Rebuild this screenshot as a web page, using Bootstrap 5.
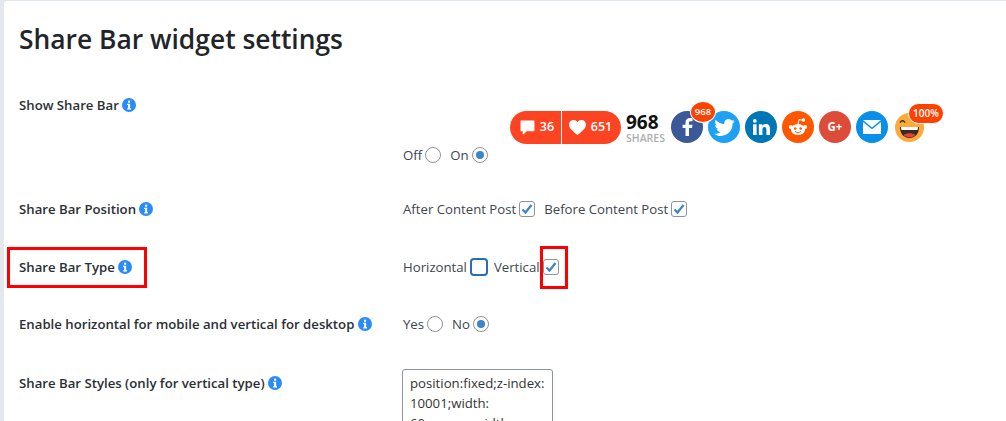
<!DOCTYPE html>
<html>
<head>
    <meta charset="UTF-8">
    <title>Share Bar widget settings</title>
    <link href="https://cdn.jsdelivr.net/npm/bootstrap@5.3.0/dist/css/bootstrap.min.css" rel="stylesheet">
    <style>
        html, body { height: 100%; overflow: hidden; }
        body { background: #e4e8ec; font-family: "Open Sans", "Noto Sans", sans-serif; color: #212529; font-size: 13px; }
        .panel-wrap { margin-left: 4px; padding-top: 1px; height: 421px; background: #dfe8f0; }
        .panel-main { background: #fff; height: 420px; padding: 20px 15px 0; overflow: hidden; border-top-left-radius: 3px; }
        .panel-title { font-size: 26.4px; font-weight: 600; line-height: 36px; margin: 0 0 38px; color: #212529; }
        .set-row { display: flex; position: relative; }
        .set-label { width: 384px; flex: none; font-weight: 600; font-size: 13.2px; line-height: 20px; color: #2a2f35; }
        .set-ctrl { font-size: 13.2px; line-height: 20px; color: #3d4650; }
        .row-show { height: 104px; }
        .row-pos { height: 58px; }
        .row-type { height: 57px; }
        .row-enable { height: 59px; }
        .info-ico { width: 14px; height: 14px; vertical-align: -2px; margin-left: 0; }
        .opt-line { display: flex; align-items: center; gap: 3px; height: 20px; }
        .opt-line .gap-after { margin-right: 6px; }
        .opt-line .gap-tight { margin-right: 3px; }
        .radio-ico, .check-ico { flex: none; }
        .bar-line { display: flex; align-items: center; margin-left: 107px; height: 34px; margin-top: 15px; margin-bottom: 1px; position: relative; width: 440px; }
        .pill-red { display: flex; background: #fc4422; color: #fff; height: 33px; border-radius: 17px; font-size: 12.5px; font-weight: 600; width: 111px; flex: none; }
        .pill-part { display: flex; align-items: center; justify-content: center; gap: 5px; }
        .pill-part:first-child { width: 52px; border-right: 1px solid #fff; padding-left: 3px; }
        .pill-part:last-child { flex: 1; padding-right: 2px; }
        .count-box { width: 50px; flex: none; padding-left: 5px; padding-top: 3px; line-height: 1; }
        .count-num { font-size: 19px; font-weight: 700; color: #111; line-height: 19px; }
        .count-lbl { font-size: 10.5px; font-weight: 600; color: #adadad; line-height: 13px; }
        .soc { width: 32px; height: 32px; border-radius: 50%; margin-right: 5px; flex: none; display: flex; align-items: center; justify-content: center; }
        .soc svg { display: block; }
        .soc-fb { background: #3b5998; }
        .soc-tw { background: #1da1f2; }
        .soc-li { background: #0077b5; }
        .soc-rd { background: #ff5700; }
        .soc-gp { background: #dd4b39; color: #fff; font-weight: 700; font-size: 11.5px; }
        .soc-ml { background: #0a8fe8; }
        .emoji-ico { margin-left: 2px; flex: none; }
        .bubble { position: absolute; background: #fc4200; color: #fff; font-weight: 600; border: 1px solid #fff; border-radius: 12px; text-align: center; }
        .bubble-fb { left: 180px; top: -9px; width: 26px; height: 22px; border-radius: 50%; font-size: 9.5px; line-height: 20px; }
        .bubble-em { left: 398px; top: -7px; width: 36px; height: 21px; font-size: 10px; line-height: 19px; }
        .mark-box { position: absolute; border: 3px solid #f00; pointer-events: none; }
        .mark-label { left: -12px; top: -10px; width: 140px; height: 41px; }
        .mark-check { left: 521px; top: -11px; width: 28px; height: 43px; }
        .style-box { width: 151px; height: 110px; border: 1px solid #8f9499; border-radius: 3px; padding: 3px 7px; font-size: 13.2px; line-height: 20px; color: #333; overflow: hidden; resize: none; font-family: inherit; display: block; margin-top: -4px; margin-left: -1px; white-space: pre; }
    </style>
</head>
<body>
    <div class="panel-wrap">
        <div class="panel-main">
            <h1 class="panel-title">Share Bar widget settings</h1>

            <div class="set-row row-show">
                <div class="set-label">Show Share Bar <svg class="info-ico" viewBox="0 0 16 16"><circle cx="8" cy="8" r="8" fill="#2b8cf7"/><rect x="6.900" y="3" width="2.400" height="2.400" fill="#fff"/><path d="M5.900 6.600h3.400v5h1v1.400H5.900v-1.400h1v-3.600h-1z" fill="#fff"/></svg></div>
                <div class="set-ctrl">
                    <div class="bar-line">
                        <div class="pill-red">
                            <div class="pill-part"><svg width="15" height="15" viewBox="0 0 14 14"><path d="M1 1h12v9H6l-3 3v-3H1z" fill="#fff" stroke="#fff" stroke-linejoin="round"/></svg>36</div>
                            <div class="pill-part"><svg width="17" height="15" viewBox="0 0 17 15"><path d="M8.500 15C3 10.500 0 8 0 4.500 0 2 2 0 4.500 0 6.200 0 7.700.9 8.500 2.300 9.300.9 10.800 0 12.500 0 15 0 17 2 17 4.500 17 8 14 10.500 8.500 15z" fill="#fff"/></svg>651</div>
                        </div>
                        <div class="count-box"><div class="count-num">968</div><div class="count-lbl">SHARES</div></div>
                        <div class="soc soc-fb"><svg width="11" height="18" viewBox="0 0 11 18"><path d="M7 18V10h3l.5-3.300H7V4.800C7 3.800 7.400 3.200 8.600 3.200h1.900V.3C10 .2 9 0 8 0 5.400 0 3.500 1.600 3.500 4.400v2.300H.6V10h2.900v8z" fill="#fff"/></svg></div>
                        <div class="soc soc-tw"><svg width="21" height="17" viewBox="0 0 24 20"><path d="M24 2.400c-.9.400-1.800.7-2.800.8 1-.6 1.800-1.600 2.200-2.700-1 .6-2 1-3.100 1.200C19.300.7 18 0 16.600 0c-2.700 0-4.900 2.200-4.900 4.900 0 .4 0 .8.100 1.100C7.700 5.800 4.100 3.900 1.700.9 1.200 1.600 1 2.500 1 3.400c0 1.700.9 3.200 2.200 4.100-.8 0-1.600-.2-2.200-.6v.1c0 2.400 1.700 4.400 3.900 4.800-.4.100-.8.200-1.300.2-.3 0-.6 0-.9-.1.600 2 2.400 3.400 4.600 3.400-1.700 1.300-3.800 2.100-6.100 2.100-.4 0-.8 0-1.200-.1C2.200 19.200 4.800 20 7.500 20c9.100 0 14-7.500 14-14v-.6c1-.7 1.800-1.600 2.500-3z" fill="#fff"/></svg></div>
                        <div class="soc soc-li"><svg width="17" height="16" viewBox="0 0 18 17"><path d="M0 5.500h3.800V17H0zM1.900 0a2 2 0 1 1 0 4 2 2 0 0 1 0-4zM6.200 5.500h3.600v1.600c.6-1 1.900-1.900 3.800-1.900 3.400 0 4.400 2.200 4.400 5.300V17h-3.800v-5.800c0-1.500-.4-2.800-1.900-2.800-1.600 0-2.300 1.200-2.300 2.800V17H6.200z" fill="#fff"/></svg></div>
                        <div class="soc soc-rd"><svg width="20" height="18" viewBox="0 0 20 18"><ellipse cx="10" cy="11.500" rx="7" ry="5.500" fill="#fff"/><circle cx="2.800" cy="9" r="2" fill="#fff"/><circle cx="17.200" cy="9" r="2" fill="#fff"/><circle cx="15.500" cy="2" r="1.700" fill="#fff"/><path d="M10 6.500 11 1.500l4 .8" stroke="#fff" fill="none"/><circle cx="7.300" cy="10.500" r="1.300" fill="#ff5700"/><circle cx="12.700" cy="10.500" r="1.300" fill="#ff5700"/><path d="M7 13.500c2 1.300 4 1.300 6 0" stroke="#ff5700" fill="none"/></svg></div>
                        <div class="soc soc-gp">G+</div>
                        <div class="soc soc-ml"><svg width="18" height="14" viewBox="0 0 18 14"><path d="M0 0h18L9 7.500z" fill="#fff"/><path d="M0 2l9 7.300L18 2v12H0z" fill="#fff"/></svg></div>
                        <svg class="emoji-ico" width="29" height="29" viewBox="0 0 29 29"><circle cx="14.500" cy="14.500" r="14.500" fill="#fcab3a"/><path d="M5 14h19c0 7-4 11-9.500 11S5 21 5 14z" fill="#3a2a25"/><path d="M6 14h17l-.4 3H6.400z" fill="#fff"/><path d="M8.500 22c3-2.500 9-2.500 12 0-3 3-9 3-12 0z" fill="#e9403a"/><path d="M5 9.500q2.500-3.500 5 0M19 9.500q2.500-3.500 5 0" stroke="#3a2a25" stroke-width="1.400" fill="none"/></svg>
                        <div class="bubble bubble-fb">968</div>
                        <div class="bubble bubble-em">100%</div>
                    </div>
                    <div class="opt-line">
                        <span>Off</span>
                        <svg class="radio-ico gap-after" width="16" height="16" viewBox="0 0 16 16"><circle cx="8" cy="8" r="7.500" fill="#fff" stroke="#8f9499"/></svg>
                        <span>On</span>
                        <svg class="radio-ico" width="16" height="16" viewBox="0 0 16 16"><circle cx="8" cy="8" r="7.500" fill="#fff" stroke="#8f9499"/><circle cx="8" cy="8" r="4" fill="#3a86c8"/></svg>
                    </div>
                </div>
            </div>

            <div class="set-row row-pos">
                <div class="set-label">Share Bar Position <svg class="info-ico" viewBox="0 0 16 16"><circle cx="8" cy="8" r="8" fill="#2b8cf7"/><rect x="6.900" y="3" width="2.400" height="2.400" fill="#fff"/><path d="M5.900 6.600h3.400v5h1v1.400H5.900v-1.400h1v-3.600h-1z" fill="#fff"/></svg></div>
                <div class="set-ctrl">
                    <div class="opt-line">
                        <span>After Content Post</span>
                        <svg class="check-ico gap-after" width="16" height="16" viewBox="0 0 16 16"><rect x=".5" y=".5" width="15" height="15" rx="2.500" fill="#fff" stroke="#8f9499"/><path d="M3.500 8.500 6.500 11.500 12.500 4" fill="none" stroke="#3a86c8" stroke-width="2.200"/></svg>
                        <span>Before Content Post</span>
                        <svg class="check-ico" width="16" height="16" viewBox="0 0 16 16"><rect x=".5" y=".5" width="15" height="15" rx="2.500" fill="#fff" stroke="#8f9499"/><path d="M3.500 8.500 6.500 11.500 12.500 4" fill="none" stroke="#3a86c8" stroke-width="2.200"/></svg>
                    </div>
                </div>
            </div>

            <div class="set-row row-type">
                <div class="set-label">Share Bar Type <svg class="info-ico" viewBox="0 0 16 16"><circle cx="8" cy="8" r="8" fill="#2b8cf7"/><rect x="6.900" y="3" width="2.400" height="2.400" fill="#fff"/><path d="M5.900 6.600h3.400v5h1v1.400H5.900v-1.400h1v-3.600h-1z" fill="#fff"/></svg></div>
                <div class="set-ctrl">
                    <div class="opt-line">
                        <span>Horizontal</span>
                        <svg class="check-ico gap-tight" width="18" height="18" viewBox="0 0 18 18"><rect x="1" y="1" width="16" height="16" rx="3" fill="#fff" stroke="#2a6db0" stroke-width="2"/></svg>
                        <span>Vertical</span>
                        <svg class="check-ico" width="16" height="16" viewBox="0 0 16 16"><rect x=".5" y=".5" width="15" height="15" rx="2.500" fill="#fff" stroke="#8f9499"/><path d="M3.500 8.500 6.500 11.500 12.500 4" fill="none" stroke="#3a86c8" stroke-width="2.200"/></svg>
                    </div>
                </div>
                <div class="mark-box mark-label"></div>
                <div class="mark-box mark-check"></div>
            </div>

            <div class="set-row row-enable">
                <div class="set-label">Enable horizontal for mobile and vertical for desktop <svg class="info-ico" viewBox="0 0 16 16"><circle cx="8" cy="8" r="8" fill="#2b8cf7"/><rect x="6.900" y="3" width="2.400" height="2.400" fill="#fff"/><path d="M5.900 6.600h3.400v5h1v1.400H5.900v-1.400h1v-3.600h-1z" fill="#fff"/></svg></div>
                <div class="set-ctrl">
                    <div class="opt-line">
                        <span>Yes</span>
                        <svg class="radio-ico gap-after" width="16" height="16" viewBox="0 0 16 16"><circle cx="8" cy="8" r="7.500" fill="#fff" stroke="#8f9499"/></svg>
                        <span>No</span>
                        <svg class="radio-ico" width="16" height="16" viewBox="0 0 16 16"><circle cx="8" cy="8" r="7.500" fill="#fff" stroke="#8f9499"/><circle cx="8" cy="8" r="4" fill="#3a86c8"/></svg>
                    </div>
                </div>
            </div>

            <div class="set-row">
                <div class="set-label">Share Bar Styles (only for vertical type) <svg class="info-ico" viewBox="0 0 16 16"><circle cx="8" cy="8" r="8" fill="#2b8cf7"/><rect x="6.900" y="3" width="2.400" height="2.400" fill="#fff"/><path d="M5.900 6.600h3.400v5h1v1.400H5.900v-1.400h1v-3.600h-1z" fill="#fff"/></svg></div>
                <div class="set-ctrl">
                    <textarea class="style-box" readonly>position:fixed;z-index:
10001;width:
60px;max-width:
60px;</textarea>
                </div>
            </div>
        </div>
    </div>
    <script src="https://cdn.jsdelivr.net/npm/bootstrap@5.3.0/dist/js/bootstrap.bundle.min.js"></script>
</body>
</html>
